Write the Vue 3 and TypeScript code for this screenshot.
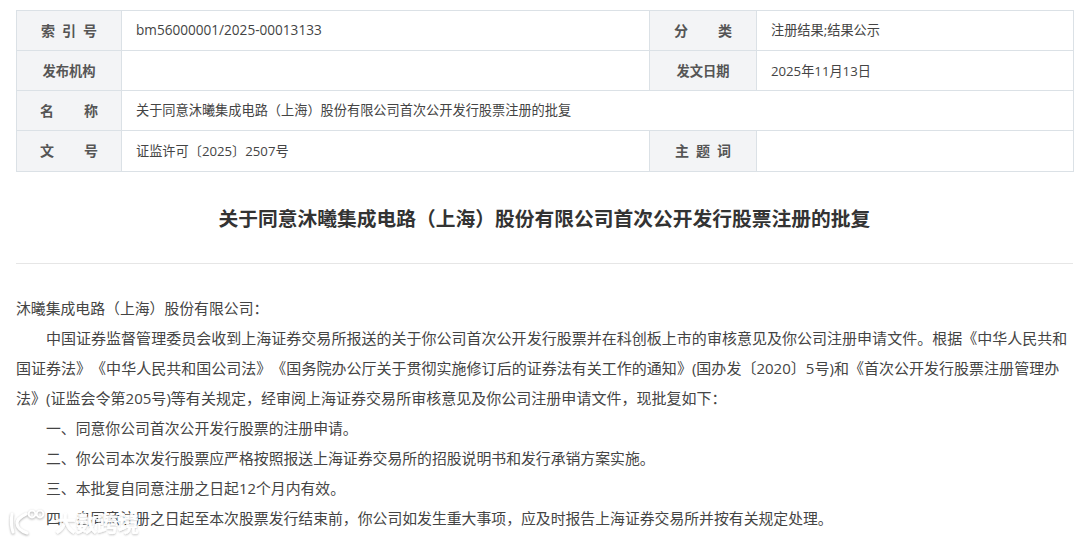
<script setup lang="ts">
interface Row { text: string; cls: string }
const paragraphs: Row[] = [
  { text: '沐曦集成电路（上海）股份有限公司：', cls: '' },
  { text: '中国证券监督管理委员会收到上海证券交易所报送的关于你公司首次公开发行股票并在科创板上市的审核意见及你公司注册申请文件。根据《中华人民共和国证券法》《中华人民共和国公司法》《国务院办公厅关于贯彻实施修订后的证券法有关工作的通知》(国办发〔2020〕5号)和《首次公开发行股票注册管理办法》(证监会令第205号)等有关规定，经审阅上海证券交易所审核意见及你公司注册申请文件，现批复如下：', cls: 'in lead' },
  { text: '一、同意你公司首次公开发行股票的注册申请。', cls: 'in' },
  { text: '二、你公司本次发行股票应严格按照报送上海证券交易所的招股说明书和发行承销方案实施。', cls: 'in' },
  { text: '三、本批复自同意注册之日起12个月内有效。', cls: 'in' },
  { text: '四、自同意注册之日起至本次股票发行结束前，你公司如发生重大事项，应及时报告上海证券交易所并按有关规定处理。', cls: 'in' },
]
</script>

<template>
  <div class="page">
    <div class="meta">
      <div class="cell head"><span class="sp3">索引号</span></div>
      <div class="cell val big">bm56000001/2025-00013133</div>
      <div class="cell head"><span class="sp2">分类</span></div>
      <div class="cell val">注册结果;结果公示</div>

      <div class="cell head low"><span class="tight">发布机构</span></div>
      <div class="cell val low"></div>
      <div class="cell head low"><span class="tight">发文日期</span></div>
      <div class="cell val low">2025年11月13日</div>

      <div class="cell head"><span class="sp2">名称</span></div>
      <div class="cell val span3">关于同意沐曦集成电路（上海）股份有限公司首次公开发行股票注册的批复</div>

      <div class="cell head"><span class="sp2">文号</span></div>
      <div class="cell val">证监许可〔2025〕2507号</div>
      <div class="cell head"><span class="sp3">主题词</span></div>
      <div class="cell val"></div>
    </div>

    <h1 class="title">关于同意沐曦集成电路（上海）股份有限公司首次公开发行股票注册的批复</h1>
    <div class="rule"></div>

    <div class="body">
      <p v-for="(p, i) in paragraphs" :key="i" :class="p.cls">{{ p.text }}</p>
    </div>

    <div class="mark">
      <svg class="logo" width="40" height="26" viewBox="0 0 40 26" fill="none" stroke="#fff" stroke-width="3.2" stroke-linecap="round">
        <path d="M4 5 C3 11 3 17 5 23" />
        <path d="M18 5 C12 8 9 11 9 14 C9 18 13 22 19 24" />
        <circle cx="24" cy="5" r="3.4" stroke-width="2" />
        <circle cx="32" cy="5" r="3.4" stroke-width="2" />
      </svg>
      <span class="mark-text">大数跨境</span>
    </div>
  </div>
</template>

<style scoped>
.page {
  position: relative;
  width: 1080px;
  height: 541px;
  overflow: hidden;
  background: #fff;
  padding-top: 10px;
  box-sizing: border-box;
  font-family: "Open Sans", "Noto Sans CJK SC", sans-serif;
  color: #444;
  text-spacing-trim: space-all;
}
.meta {
  margin-left: 16px;
  width: 1058px;
  display: grid;
  grid-template-columns: 105px 528px 107px 317px;
  grid-template-rows: 40px 40px 40px 41px;
  box-sizing: border-box;
  border-top: 1px solid #dbe1e6;
  border-left: 1px solid #dbe1e6;
}
.cell {
  box-sizing: border-box;
  border-right: 1px solid #dbe1e6;
  border-bottom: 1px solid #dbe1e6;
  display: flex;
  align-items: center;
  padding-bottom: 2px;
  font-size: 13.2px;
}
.cell.low { padding-bottom: 0; }
.head {
  background: #f3f4f6;
  justify-content: center;
  font-weight: 700;
  font-size: 14px;
  color: #555;
}
.val {
  padding-left: 14px;
  color: #444;
}
.big { font-size: 13.6px; }
.span3 { grid-column: span 3; }
.sp3 { letter-spacing: 7px; margin-right: -7px; }
.sp2 { letter-spacing: 30px; margin-right: -30px; }
.tight { font-size: 13.3px; }
.title {
  margin: 32px 0 0;
  padding-left: 9px;
  text-align: center;
  font-size: 19.75px;
  line-height: 30px;
  font-weight: 700;
  color: #333;
}
.rule {
  margin: 29px 7px 0 16px;
  height: 1px;
  background: #e6e6e6;
}
.body {
  margin: 29px 12px 0 16px;
  font-size: 14.85px;
  line-height: 30px;
  color: #444;
}
.body p { margin: 0; }
.in { text-indent: 30px; }
.lead { font-size: 15px; letter-spacing: 0.02px; }
.mark {
  position: absolute;
  left: 8px;
  top: 507px;
  display: flex;
  align-items: center;
  gap: 7px;
  opacity: 0.9;
  color: #fff;
}
.mark-text {
  font-size: 21px;
  line-height: 26px;
  font-weight: 700;
  margin-top: 3px;
  -webkit-text-stroke: 0.6px #fff;
  text-shadow: 0 1px 2px rgba(110,110,110,.55);
}
.logo { filter: drop-shadow(0 1px 1px rgba(110,110,110,.6)); }
</style>
